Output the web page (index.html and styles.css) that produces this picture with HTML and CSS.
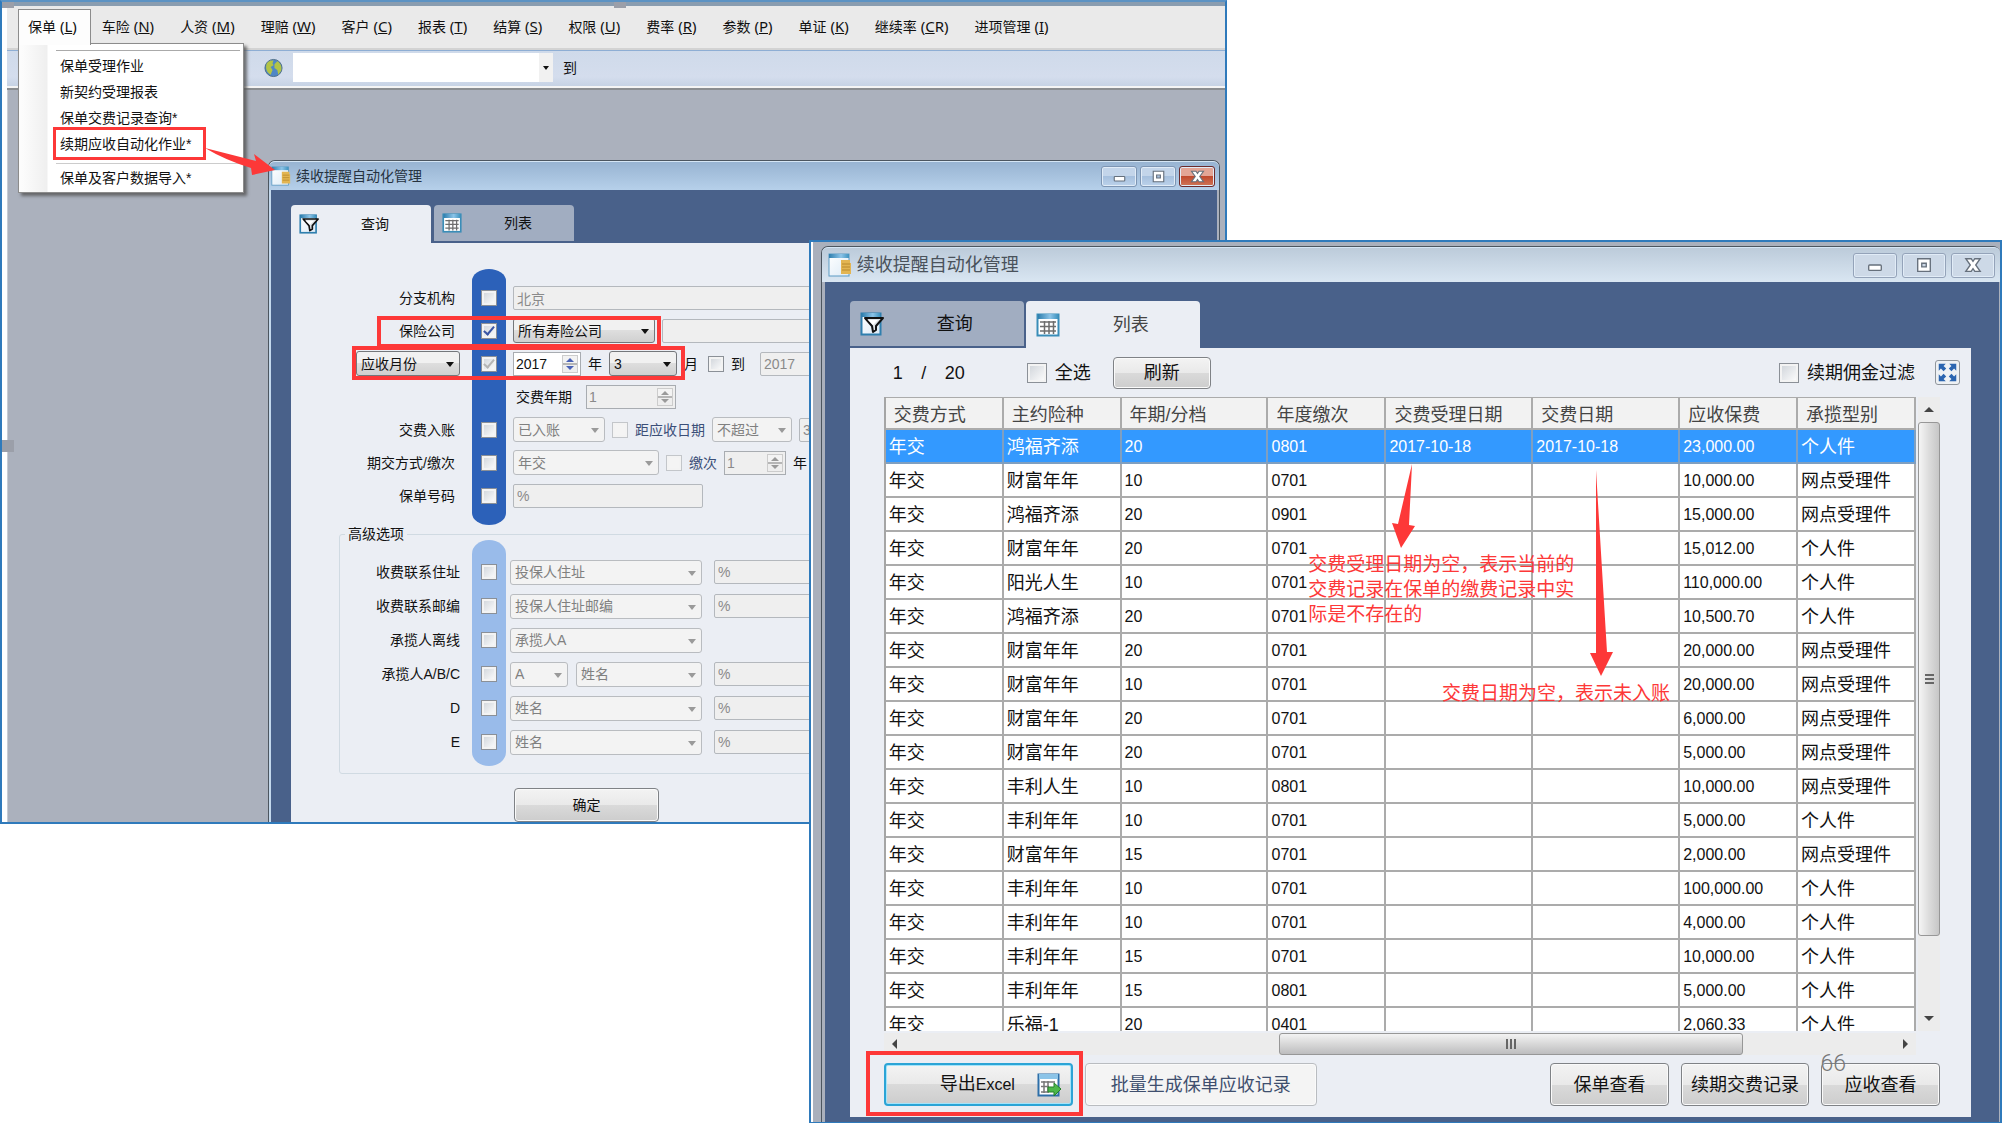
FILE: index.html
```html
<!DOCTYPE html>
<html lang="zh-CN">
<head>
<meta charset="utf-8">
<title>续收提醒自动化管理</title>
<link rel="stylesheet" href="styles.css">
</head>
<body>
<svg class="defs" aria-hidden="true">
  <defs>
    <linearGradient id="head" x1="0" y1="0" x2="1" y2="0"><stop offset="0" stop-color="#2f7fae"/><stop offset=".6" stop-color="#8cc4e8"/><stop offset="1" stop-color="#3f93bf"/></linearGradient>
    <linearGradient id="paper" x1="0" y1="0" x2="1" y2="1"><stop offset="0" stop-color="#fff"/><stop offset="1" stop-color="#dceaf6"/></linearGradient>
  </defs>
  <symbol id="i-form" viewBox="0 0 24 24">
    <rect x="1" y="1" width="20" height="22" fill="url(#paper)" stroke="#5d9bc4"/>
    <rect x="1" y="1" width="20" height="4" fill="url(#head)"/>
    <path d="M13 7h9v3h1v11H13z" fill="#e3b552"/><path d="M14 11h8M14 14h8M14 17h8" stroke="#b98a2c"/>
  </symbol>
  <symbol id="i-filter" viewBox="0 0 24 24">
    <rect x="1.500" y="1.500" width="19" height="21" fill="url(#paper)" stroke="#2f7fae" stroke-width="2"/>
    <rect x="2" y="1" width="18" height="4" fill="url(#head)"/>
    <path d="M5 6h18l-7 8v4l-3 2-1-6z" fill="#dfe3e6" stroke="#111" stroke-width="2" stroke-linejoin="round"/>
    <path d="M8 8h10l-5 5z" fill="#fff"/>
  </symbol>
  <symbol id="i-grid" viewBox="0 0 24 24">
    <rect x="1.500" y="1.500" width="21" height="21" fill="#fff" stroke="#3a8db8" stroke-width="2"/>
    <rect x="2" y="1" width="20" height="5" fill="url(#head)"/>
    <path d="M4 9h16M4 13.500h16M4 18h16M8.500 8v13M13 8v13M17.500 8v13" stroke="#6d6d6d" stroke-width="1.500" fill="none"/>
  </symbol>
  <symbol id="i-export" viewBox="0 0 24 24">
    <rect x="1.500" y="1.500" width="20" height="21" fill="#fff" stroke="#2e6fa8" stroke-width="2"/>
    <rect x="2" y="1" width="19" height="5" fill="#8cc4e8"/>
    <path d="M4 9h14M4 13.500h8M4 19h7M7 8v12M11 8v12" stroke="#777" stroke-width="1.500" fill="none"/>
    <path d="M11 14h6v-4l7 6-7 7v-4h-6z" fill="#4cb749" stroke="#27802a"/>
  </symbol>
  <symbol id="i-globe" viewBox="0 0 20 20">
    <circle cx="10" cy="10" r="9" fill="#4f87c6" stroke="#4c6d86"/>
    <path d="M3 5c2-3 5-3 7-3l-1 3 1 2-3 2 2 3-2 5c-4-2-6-7-4-12zM11 6l3-3c4 2 5 7 4 10l-3 4-1-5-3-2z" fill="#b3c446"/>
  </symbol>
  <symbol id="i-expand" viewBox="0 0 24 24">
    <path d="M2 2h8L7.500 4.500l3 3-3 3-3-3L2 10zM22 2v8l-2.500-2.500-3 3-3-3 3-3L14 2zM2 22v-8l2.500 2.500 3-3 3 3-3 3L10 22zM22 22h-8l2.500-2.500-3-3 3-3 3 3L22 14z" fill="#2b65b0"/>
  </symbol>
  <symbol id="i-min" viewBox="0 0 20 20"><rect x="3" y="10" width="14" height="6" rx="1" fill="#fff" stroke="#66707c" stroke-width="1.500"/></symbol>
  <symbol id="i-max" viewBox="0 0 20 20"><path d="M3 3h14v14H3zM7.500 8v4h5V8z" fill="#fff" fill-rule="evenodd" stroke="#66707c" stroke-width="1.500"/></symbol>
  <symbol id="i-close" viewBox="0 0 20 20"><path d="M2 3h6l2 3 2-3h6l-5 7 5 7h-6l-2-3-2 3H2l5-7z" fill="#fff" stroke="#66707c" stroke-width="1.500"/></symbol>
</svg>

<main class="slide">
  <section class="shot shot-main">
    <nav class="menubar">
      <a href="#" class="open">保单 <span>(<u>L</u>)</span></a><a href="#">车险 <span>(<u>N</u>)</span></a><a href="#">人资 <span>(<u>M</u>)</span></a><a href="#">理赔 <span>(<u>W</u>)</span></a><a href="#">客户 <span>(<u>C</u>)</span></a><a href="#">报表 <span>(<u>T</u>)</span></a><a href="#">结算 <span>(<u>S</u>)</span></a><a href="#">权限 <span>(<u>U</u>)</span></a><a href="#">费率 <span>(<u>R</u>)</span></a><a href="#">参数 <span>(<u>P</u>)</span></a><a href="#">单证 <span>(<u>K</u>)</span></a><a href="#">继续率 <span>(<u>C</u>R)</span></a><a href="#">进项管理 <span>(<u>I</u>)</span></a>
    </nav>
    <div class="toolbar">
      <svg><use href="#i-globe"/></svg>
      <span class="pick address"><select id="addr" aria-label="地址"><option></option></select></span>
      <label for="addr">到</label>
    </div>
    <ul class="dropdown">
      <li><a href="#">保单受理作业</a></li>
      <li><a href="#">新契约受理报表</a></li>
      <li><a href="#">保单交费记录查询*</a></li>
      <li class="marked"><a href="#">续期应收自动化作业*</a></li>
      <li class="split"><a href="#">保单及客户数据导入*</a></li>
    </ul>
    <svg class="arrow-menu" viewBox="0 0 70 32"><path d="M0 0L51 13L49 6L70 22L47 27L46 20Q20 12 0 0z"/></svg>
    <i class="handle h-left"></i><i class="handle h-mid"></i><i class="handle h-side"></i>

    <div class="mdi">
      <div class="window active">
        <header class="titlebar">
          <svg><use href="#i-form"/></svg><h2>续收提醒自动化管理</h2>
          <button aria-label="最小化"><svg><use href="#i-min"/></svg></button>
          <button aria-label="最大化"><svg><use href="#i-max"/></svg></button>
          <button class="close" aria-label="关闭"><svg><use href="#i-close"/></svg></button>
        </header>
        <div class="client">
          <div class="tabs">
            <button class="tab on"><svg><use href="#i-filter"/></svg><span>查询</span></button>
            <button class="tab"><svg><use href="#i-grid"/></svg><span>列表</span></button>
          </div>
          <form class="page">
            <div class="criteria">
              <div class="row">
                <label for="c1">分支机构</label><input type="checkbox" id="c1">
                <div class="fields"><input class="text grow" value="北京" aria-label="分支机构" disabled></div>
              </div>
              <div class="row">
                <label for="c2">保险公司</label><input type="checkbox" id="c2" checked>
                <div class="fields"><span class="pick live w-company"><select aria-label="保险公司"><option>所有寿险公司</option></select></span><input class="text grow" aria-label="公司名称" disabled></div>
              </div>
              <div class="row">
                <span class="pick live w-month"><select aria-label="月份类型"><option>应收月份</option></select></span><input type="checkbox" id="c3" aria-label="应收月份" checked disabled>
                <div class="fields"><span class="spin on w-year"><input value="2017" aria-label="年份"><b></b></span><span>年</span><span class="pick live w-num"><select aria-label="月"><option>3</option></select></span><span>月</span><span class="until"><input type="checkbox" id="c3b"><label for="c3b">到</label></span><input class="text grow" value="2017" aria-label="截止年份" disabled></div>
              </div>
              <div class="row">
                <div class="fields roomy"><label for="term">交费年期</label><span class="spin w-term"><input id="term" value="1" disabled><b></b></span></div>
              </div>
              <div class="row">
                <label for="c5">交费入账</label><input type="checkbox" id="c5">
                <div class="fields"><span class="pick w-posted"><select aria-label="入账" disabled><option>已入账</option></select></span><input type="checkbox" id="c5b" class="off" disabled><label class="blue" for="c5b">距应收日期</label><span class="pick w-limit"><select aria-label="比较" disabled><option>不超过</option></select></span><input class="text grow" value="3" aria-label="天数" disabled></div>
              </div>
              <div class="row">
                <label for="c6">期交方式/缴次</label><input type="checkbox" id="c6">
                <div class="fields"><span class="pick w-mode"><select aria-label="期交方式" disabled><option>年交</option></select></span><input type="checkbox" id="c6b" class="off" disabled><label class="blue" for="c6b">缴次</label><span class="spin w-times"><input value="1" aria-label="缴次" disabled><b></b></span><span>年</span></div>
              </div>
              <div class="row">
                <label for="c7">保单号码</label><input type="checkbox" id="c7">
                <div class="fields"><input class="text w-policy" value="%" aria-label="保单号码" disabled></div>
              </div>
              <div class="pill"></div>
              <i class="frame frame-company"></i><i class="frame frame-month"></i>
            </div>
            <fieldset>
              <legend>高级选项</legend>
              <div class="criteria more">
                <div class="row">
                  <label for="d1">收费联系住址</label><input type="checkbox" id="d1">
                  <div class="fields"><span class="pick w-adv"><select aria-label="住址" disabled><option>投保人住址</option></select></span><input class="text grow" value="%" aria-label="住址内容" disabled></div>
                </div>
                <div class="row">
                  <label for="d2">收费联系邮编</label><input type="checkbox" id="d2">
                  <div class="fields"><span class="pick w-adv"><select aria-label="邮编" disabled><option>投保人住址邮编</option></select></span><input class="text grow" value="%" aria-label="邮编内容" disabled></div>
                </div>
                <div class="row">
                  <label for="d3">承揽人离线</label><input type="checkbox" id="d3">
                  <div class="fields"><span class="pick w-adv"><select aria-label="离线" disabled><option>承揽人A</option></select></span></div>
                </div>
                <div class="row">
                  <label for="d4">承揽人A/B/C</label><input type="checkbox" id="d4">
                  <div class="fields"><span class="duo"><span class="pick w-abc"><select aria-label="承揽人" disabled><option>A</option></select></span><span class="pick grow"><select aria-label="承揽人字段" disabled><option>姓名</option></select></span></span><input class="text grow" value="%" aria-label="承揽人内容" disabled></div>
                </div>
                <div class="row">
                  <label for="d5">D</label><input type="checkbox" id="d5">
                  <div class="fields"><span class="pick w-adv"><select aria-label="D字段" disabled><option>姓名</option></select></span><input class="text grow" value="%" aria-label="D内容" disabled></div>
                </div>
                <div class="row">
                  <label for="d6">E</label><input type="checkbox" id="d6">
                  <div class="fields"><span class="pick w-adv"><select aria-label="E字段" disabled><option>姓名</option></select></span><input class="text grow" value="%" aria-label="E内容" disabled></div>
                </div>
                <div class="pill"></div>
              </div>
            </fieldset>
            <button type="button" class="btn confirm">确定</button>
          </form>
        </div>
      </div>
    </div>
  </section>

  <section class="shot shot-list">
    <div class="window">
      <header class="titlebar">
        <svg><use href="#i-form"/></svg><h2>续收提醒自动化管理</h2>
        <button aria-label="最小化"><svg><use href="#i-min"/></svg></button>
        <button aria-label="最大化"><svg><use href="#i-max"/></svg></button>
        <button aria-label="关闭"><svg><use href="#i-close"/></svg></button>
      </header>
      <div class="client">
        <div class="tabs">
          <button class="tab"><svg><use href="#i-filter"/></svg><span>查询</span></button>
          <button class="tab on"><svg><use href="#i-grid"/></svg><span>列表</span></button>
        </div>
        <div class="page">
          <div class="tools">
            <span class="pager"><span>1</span><span>/</span><span>20</span></span>
            <input type="checkbox" id="all"><label for="all">全选</label>
            <button class="btn refresh">刷新</button>
            <span class="push"></span>
            <input type="checkbox" id="flt"><label for="flt">续期佣金过滤</label>
            <button class="expand" aria-label="全屏"><svg><use href="#i-expand"/></svg></button>
          </div>
          <div class="sheet">
            <div class="viewport">
              <table>
                <colgroup><col class="c-s"><col class="c-s"><col class="c-l"><col class="c-s"><col class="c-l"><col class="c-l"><col class="c-s"><col class="c-s"></colgroup>
                <thead><tr><th>交费方式</th><th>主约险种</th><th>年期/分档</th><th>年度缴次</th><th>交费受理日期</th><th>交费日期</th><th>应收保费</th><th>承揽型别</th></tr></thead>
                <tbody>
                  <tr class="sel"><td>年交</td><td>鸿福齐添</td><td>20</td><td>0801</td><td>2017-10-18</td><td>2017-10-18</td><td>23,000.00</td><td>个人件</td></tr>
                  <tr><td>年交</td><td>财富年年</td><td>10</td><td>0701</td><td></td><td></td><td>10,000.00</td><td>网点受理件</td></tr>
                  <tr><td>年交</td><td>鸿福齐添</td><td>20</td><td>0901</td><td></td><td></td><td>15,000.00</td><td>网点受理件</td></tr>
                  <tr><td>年交</td><td>财富年年</td><td>20</td><td>0701</td><td></td><td></td><td>15,012.00</td><td>个人件</td></tr>
                  <tr><td>年交</td><td>阳光人生</td><td>10</td><td>0701</td><td></td><td></td><td>110,000.00</td><td>个人件</td></tr>
                  <tr><td>年交</td><td>鸿福齐添</td><td>20</td><td>0701</td><td></td><td></td><td>10,500.70</td><td>个人件</td></tr>
                  <tr><td>年交</td><td>财富年年</td><td>20</td><td>0701</td><td></td><td></td><td>20,000.00</td><td>网点受理件</td></tr>
                  <tr><td>年交</td><td>财富年年</td><td>10</td><td>0701</td><td></td><td></td><td>20,000.00</td><td>网点受理件</td></tr>
                  <tr><td>年交</td><td>财富年年</td><td>20</td><td>0701</td><td></td><td></td><td>6,000.00</td><td>网点受理件</td></tr>
                  <tr><td>年交</td><td>财富年年</td><td>20</td><td>0701</td><td></td><td></td><td>5,000.00</td><td>网点受理件</td></tr>
                  <tr><td>年交</td><td>丰利人生</td><td>10</td><td>0801</td><td></td><td></td><td>10,000.00</td><td>网点受理件</td></tr>
                  <tr><td>年交</td><td>丰利年年</td><td>10</td><td>0701</td><td></td><td></td><td>5,000.00</td><td>个人件</td></tr>
                  <tr><td>年交</td><td>财富年年</td><td>15</td><td>0701</td><td></td><td></td><td>2,000.00</td><td>网点受理件</td></tr>
                  <tr><td>年交</td><td>丰利年年</td><td>10</td><td>0701</td><td></td><td></td><td>100,000.00</td><td>个人件</td></tr>
                  <tr><td>年交</td><td>丰利年年</td><td>10</td><td>0701</td><td></td><td></td><td>4,000.00</td><td>个人件</td></tr>
                  <tr><td>年交</td><td>丰利年年</td><td>15</td><td>0701</td><td></td><td></td><td>10,000.00</td><td>个人件</td></tr>
                  <tr><td>年交</td><td>丰利年年</td><td>15</td><td>0801</td><td></td><td></td><td>5,000.00</td><td>个人件</td></tr>
                  <tr><td>年交</td><td>乐福-1</td><td>20</td><td>0401</td><td></td><td></td><td>2,060.33</td><td>个人件</td></tr>
                </tbody>
              </table>
              <svg class="arrow-down a-one" viewBox="0 0 24 84"><path d="M20 0L17 61L23 62L9 84L0 59L6 60z"/></svg>
              <svg class="arrow-down a-two" viewBox="0 0 24 206"><path d="M6 0L17 182L23 182L11 206L0 183L6 183z"/></svg>
              <p class="note n-one">交费受理日期为空，表示当前的交费记录在保单的缴费记录中实际是不存在的</p>
              <p class="note n-two">交费日期为空，表示未入账</p>
            </div>
            <div class="vbar"><i class="tri up"></i><div class="thumb"><i></i><i></i><i></i></div><i class="tri down"></i></div>
            <div class="hbar"><i class="tri left"></i><div class="thumb"><i></i><i></i><i></i></div><i class="tri right"></i></div>
          </div>
          <footer class="actions">
            <span class="export-wrap"><button class="btn export"><span>导出<small>Excel</small></span><svg><use href="#i-export"/></svg></button><i class="frame"></i></span>
            <button class="btn batch" disabled>批量生成保单应收记录</button>
            <span class="push"></span>
            <button class="btn view">保单查看</button>
            <button class="btn record">续期交费记录</button>
            <button class="btn view">应收查看</button>
            <span class="page-no">66</span>
          </footer>
        </div>
      </div>
    </div>
  </section>
</main>
</body>
</html>
```
FILE: styles.css
```css
*, *::before, *::after { box-sizing: border-box; }
body { margin: 0; background: #fff; color: #111; font: 14px/20px "Liberation Sans", "Noto Sans CJK SC", sans-serif; }
.defs { position: absolute; width: 0; height: 0; }
button, input, select { font: inherit; color: inherit; margin: 0; }
h2, p, ul { margin: 0; padding: 0; font-weight: 400; }
a { color: inherit; text-decoration: none; }
i { font-style: normal; }
svg { display: block; flex: none; }

.slide { position: relative; min-height: 100vh; overflow: hidden; }
.shot { position: absolute; isolation: isolate; border: 2px solid #2f7abb; }
.shot-main { left: 0; top: 0; width: 61.300%; border-top-color: #5c93c4; background: #fff; padding: 4px 0 0 5px; box-shadow: inset 0 4px #8a9db0; }
.shot-list { left: 40.400%; right: 0; top: 240px; background: #aab0bc; padding: 4px 0 0 10px; box-shadow: inset 2px 0 #fff; font-size: 18px; }

/* menu bar and toolbar */
.menubar { display: flex; height: 44px; padding: 3px 0 0 11px; background: #eaeaea; border-bottom: 2px solid #d3d3d3; white-space: pre; }
.menubar a { height: 36px; padding: 0 13px; line-height: 35px; }
.menubar span { font-family: "Noto Sans", sans-serif; font-size: 15px; }
.menubar .open { position: relative; z-index: 3; padding: 0 13px 0 9px; margin-right: -2px; background: #fdfdfd; border: 1px solid #8c8c8c; border-bottom: 0; line-height: 33px; }
.toolbar { display: flex; align-items: center; gap: 10px; height: 40px; padding: 0 0 4px 257px; background: linear-gradient(#cfdaea, #d4dded 70%, #c3d0e2); border-top: 1px solid #8eaed4; border-bottom: 2px solid #8a8d90; box-shadow: inset 0 -2px #f4f4f4; }
.toolbar svg { width: 19px; height: 20px; }
.address { width: 260px; }
.dropdown { position: absolute; z-index: 2; left: 16px; top: 41px; width: 226px; padding: 11px 0 1px; list-style: none; background: linear-gradient(90deg, #fcfcfc 3px, #efefef 28px, #fff 29px); border: 1px solid #8c8c8c; box-shadow: 3px 3px 3px #555c; }
.dropdown::before { content: ""; position: absolute; left: 37px; right: 3px; top: 6px; border-top: 1px solid #aaa; }
.dropdown li { position: relative; height: 26px; padding-left: 41px; line-height: 22px; }
.dropdown a { display: block; }
.dropdown .split { height: 27px; margin-top: 5px; padding-top: 3px; }
.split::before { content: ""; position: absolute; left: 37px; right: 3px; top: -1px; border-top: 1px solid #ccc; }
.marked::after { content: ""; position: absolute; left: 34px; top: -6px; width: 153px; height: 33px; border: 3px solid #fd3838; }
.arrow-menu { position: absolute; z-index: 3; left: 203px; top: 146px; width: 70px; height: 32px; fill: #fd3838; }
.handle { position: absolute; width: 12px; height: 6px; background: #9b9fa9; top: 0; }
.h-left { left: 0; }
.h-mid { left: 50%; }
.h-side { left: 0; top: 438px; height: 12px; }

/* windows */
.mdi { padding: 70px 5px 0 260px; background: #abb1bd; border-left: 1px solid #c8ccd3; }
.window { border: 1px solid #4c5660; border-bottom: 0; border-radius: 7px 7px 0 0; }
.active { box-shadow: inset 2px 0 #c3d8ec; }
.titlebar { display: flex; align-items: center; gap: 3px; height: 29px; padding: 0 4px 0 2px; background: linear-gradient(#98b4d2, #b6d0ea); border-top: 1px solid #d5e6f5; border-radius: 6px 6px 0 0; }
.titlebar > svg { width: 20px; height: 20px; margin-right: 2px; }
.titlebar h2 { flex: 1; font-size: 14px; line-height: 20px; color: #26323f; }
.titlebar button { display: grid; place-items: center; width: 36px; height: 21px; padding: 0; border: 1px solid #7d95b3; border-radius: 3px; background: linear-gradient(#c3d5ea 50%, #a6c0de 50%, #bcd2ea); box-shadow: inset 0 0 0 1px #e1ecf7; }
.titlebar button svg { width: 15px; height: 15px; }
.titlebar .close { border-color: #6d2a2c; background: linear-gradient(#e3a596 50%, #c04a2f 50%, #cf7658); }
.client { margin: 0 2px; padding: 15px 20px 0; background: #49618a; }
.tabs { display: flex; align-items: flex-start; gap: 3px; }
.tab { display: flex; align-items: center; width: 140px; height: 36px; padding: 0 8px; border: 0; border-radius: 4px 4px 0 0; background: #a1adc1; margin-bottom: 2px; }
.tab.on { height: 38px; margin-bottom: 0; background: #ebeef4; }
.tab svg { width: 20px; height: 20px; }
.tab span { flex: 1; text-align: center; padding-left: 8px; }
.page { background: #ebeef4; }

/* query form */
.active .page { padding-top: 38px; }
.criteria { position: relative; display: grid; grid-template-columns: 174px 34px 1fr; grid-auto-rows: 33px; column-gap: 7px; padding-right: 20px; }
.row { z-index: 1; grid-column: 1 / -1; display: grid; grid-template-columns: inherit; column-gap: inherit; align-items: center; }
.row:nth-child(1) { grid-row: 1; }
.row:nth-child(2) { grid-row: 2; }
.row:nth-child(3) { grid-row: 3; }
.row:nth-child(4) { grid-row: 4; }
.row:nth-child(5) { grid-row: 5; }
.row:nth-child(6) { grid-row: 6; }
.row:nth-child(7) { grid-row: 7; }
.row > label { justify-self: end; margin-right: 10px; }
.row > .pick { justify-self: end; margin-right: 5px; }
.row > input { justify-self: center; }
.pill { grid-column: 2; grid-row: 1 / span 7; margin: -12px 0 -13px; background: #2c61b9; border-radius: 17px / 12px; }
.fields { grid-column: 3; display: flex; align-items: center; gap: 7px; min-width: 0; }
.until { display: flex; align-items: center; gap: 7px; margin: 0 8px 0 3px; }
.roomy { gap: 14px; padding-left: 3px; }
.blue { color: #3b4f78; }
input[type=checkbox] { appearance: none; display: grid; place-items: center; flex: none; width: 16px; height: 16px; border: 1px solid #8b9097; background: linear-gradient(135deg, #cdd2d8, #fff); box-shadow: inset 0 0 0 2px #f3f3f3; }
input[type=checkbox].off { border-color: #c3c6ca; background: #f4f4f4; }
input[type=checkbox]:checked::after { content: ""; width: 6px; height: 11px; margin-top: -3px; border: solid #3a55a5; border-width: 0 2px 2px 0; transform: rotate(40deg); }
input[type=checkbox]:checked:disabled::after { border-color: #b5b5b5; }
.text { height: 24px; min-width: 0; padding: 0 3px; border: 1px solid #b4b8bd; border-radius: 2px; background: #efefef; color: #8a8a8a; }
.grow { flex: 1; }
.pick { position: relative; display: block; color: #808080; }
.pick select { appearance: none; display: block; width: 100%; height: 25px; padding: 0 20px 0 4px; border: 1px solid #b9bcc0; border-radius: 3px; background: #f3f3f3; color: inherit; opacity: 1; }
.pick::after { content: ""; position: absolute; right: 6px; top: 11px; border: solid transparent; border-width: 5px 4px 0; border-top-color: #9a9a9a; pointer-events: none; }
.live { color: #111; }
.live select { border-color: #74777b; background: linear-gradient(#f1f1f1 50%, #dedede 50%, #d0d0d0); }
.live::after, .address::after { border-top-color: #111; }
.address select { height: 29px; border: 0; border-radius: 0; background: linear-gradient(90deg, #fff 246px, #f1f1f1 246px); }
.address::after { right: 4px; top: 13px; border-width: 4px 3px 0; }
.spin { display: flex; height: 24px; border: 1px solid #a8acb1; background: #efefef; color: #8a8a8a; }
.spin input { flex: 1; width: 100%; min-width: 0; padding: 0 2px; border: 0; background: none; }
.spin.on { background: #fff; color: #111; }
.spin b { position: relative; flex: none; width: 16px; margin: 2px; background: linear-gradient(#f3f3f3 45%, #b6b6b6 45% 55%, #eee 55%); border: 1px solid #ccc; }
.spin b::before, .spin b::after { content: ""; position: absolute; left: 3px; border: solid transparent; }
.spin b::before { top: 2px; border-width: 0 4px 4px; border-bottom-color: #9a9a9a; }
.spin b::after { bottom: 2px; border-width: 4px 4px 0; border-top-color: #9a9a9a; }
.spin.on b::before { border-bottom-color: #4a62b5; }
.spin.on b::after { border-top-color: #4a62b5; }
.w-company { width: 142px; }
.w-month { width: 104px; }
.w-year, .w-num { width: 68px; }
.w-term { width: 90px; }
.w-posted { width: 92px; }
.w-limit { width: 80px; }
.w-mode { width: 146px; }
.w-times { width: 62px; }
.w-policy { width: 190px; }
.w-adv, .duo { flex: none; width: 192px; }
.w-abc { width: 58px; }
.frame { position: absolute; z-index: 2; border: 4px solid #fd3838; pointer-events: none; }
.frame-company { left: 86px; top: 35px; width: 284px; height: 32px; }
.frame-month { left: 61px; top: 65px; width: 333px; height: 34px; }
fieldset { margin: 12px 20px 0 48px; padding: 11px 0 14px; border: 1px solid #d0dae2; border-radius: 3px; min-width: 0; }
legend { margin-left: 5px; padding: 0 3px; line-height: 20px; }
.more { grid-template-columns: 128px 34px 1fr; grid-auto-rows: 34px; column-gap: 4px; }
.more .pill { grid-row: 1 / span 6; margin: -15px 0 -7px; background: #99bbea; border-radius: 17px / 14px; }
.more .row > label { margin-right: 8px; }
.more .fields { gap: 12px; }
.duo { display: flex; gap: 8px; }
.btn { border: 1px solid #7f8286; border-radius: 4px; padding: 0; background: linear-gradient(#f3f3f3, #e9e9e9 50%, #dadada 50%, #cdcdcd); box-shadow: inset 0 0 0 1px #fafafa; white-space: nowrap; }
.confirm { display: block; width: 145px; height: 34px; margin: 14px 0 0 223px; }

/* list window */
.shot-list .window { border-right: 0; }
.shot-list .titlebar { height: 35px; padding: 0 5px 0 6px; gap: 5px; background: linear-gradient(#bccbda, #d9e6f2); }
.shot-list .titlebar > svg { width: 24px; height: 24px; margin: 0; }
.shot-list h2 { font-size: 18px; line-height: 24px; color: #4a525b; }
.shot-list .titlebar button { width: 44px; height: 25px; border-color: #94a3b9; background: #cdd9e7; }
.shot-list .titlebar button svg { width: 18px; height: 18px; }
.shot-list .client { margin: 0 1px 0 3px; padding: 19px 28px 5px 25px; }
.shot-list .tabs { gap: 2px; }
.shot-list .tab { width: 174px; height: 45px; padding: 0 10px; }
.shot-list .tab.on { height: 47px; color: #444; }
.shot-list .tab svg { width: 24px; height: 24px; }
.shot-list .tab span { padding-left: 12px; }
.shot-list .page { padding: 0 31px 11px 34px; }
.tools { display: flex; align-items: center; height: 49px; gap: 8px; margin-right: -20px; }
.tools input[type=checkbox] { width: 20px; height: 20px; }
.pager { display: flex; justify-content: space-between; width: 72px; margin: 0 54px 0 9px; }
.refresh { width: 98px; height: 32px; margin-left: 14px; }
.push { flex: 1; }
.expand { width: 25px; height: 25px; margin-left: 12px; padding: 1px; border: 1px solid #8f959c; border-radius: 3px; background: #eef1f4; }
.expand svg { width: 21px; height: 21px; }
.sheet { display: grid; grid-template-columns: 1fr 22px; column-gap: 2px; }
.viewport { position: relative; height: 634px; overflow: hidden; background: #fff; border-left: 2px solid #a5a5a5; }
table { width: 100%; table-layout: fixed; border-collapse: separate; border-spacing: 0; }
.c-s { width: 11.400%; }
.c-l { width: 14.200%; }
th, td { height: 34px; padding: 1px 0 0 3px; border: solid #ababab; border-width: 0 2px 2px 0; text-align: left; font-weight: 400; line-height: 24px; white-space: nowrap; }
th { height: 33px; padding: 3px 0 0 8px; border-top-width: 1px; background: #f2f2f2; color: #444; }
td:nth-child(n+3):nth-child(-n+7) { font-size: 16px; }
.sel td { background: #3399ff; color: #fff; border-color: #7f9fc0; }
.note { position: absolute; color: #fd3838; font-size: 19px; line-height: 25px; }
.n-one { left: 41%; top: 155px; width: 266px; }
.n-two { left: 54%; top: 284px; white-space: nowrap; }
.arrow-down { position: absolute; width: 24px; fill: #fd3838; }
.a-one { left: 49.100%; top: 67px; height: 84px; }
.a-two { left: 68.400%; top: 73px; height: 206px; }
.vbar, .hbar { display: flex; align-items: center; justify-content: space-between; background: #ececec; }
.vbar { flex-direction: column; padding: 10px 0; }
.hbar { margin-top: 2px; height: 22px; padding: 0 8px; }
.tri { border: 5px solid transparent; }
.up { border-top: 0; border-bottom-color: #444; }
.down { border-bottom: 0; border-top-color: #444; }
.left { border-left: 0; border-right-color: #444; }
.right { border-right: 0; border-left-color: #444; }
.thumb { display: flex; align-items: center; justify-content: center; gap: 2px; border: 1px solid #979797; border-radius: 3px; }
.vbar .thumb { flex-direction: column; width: 22px; height: 514px; margin-bottom: 70px; background: linear-gradient(90deg, #f5f5f5, #dcdcdc 50%, #c6c6c6); }
.hbar .thumb { width: 464px; height: 22px; margin-left: 222px; background: linear-gradient(#f3f3f3, #d8d8d8 50%, #bdbdbf); }
.thumb i { background: #666; }
.vbar .thumb i { width: 9px; height: 2px; }
.hbar .thumb i { width: 2px; height: 10px; }
.actions { position: relative; display: flex; align-items: center; gap: 12px; padding-top: 8px; }
.actions .btn { height: 43px; }
.export-wrap { position: relative; }
.export-wrap .frame { inset: -12px -10px -10px -18px; }
.actions .export { display: flex; align-items: center; width: 189px; padding: 0 10px 0 54px; border: 2px solid #2ba4d6; box-shadow: inset 0 0 0 1px #a4e4fa; }
.export span { flex: 1; text-align: left; }
.export small { font-size: 16px; }
.export svg { width: 24px; height: 24px; }
.batch { width: 232px; background: #f4f4f4; border-color: #b9bcc0; color: #3f4f6e; }
.view { width: 119px; }
.record { width: 128px; }
.page-no { position: absolute; right: 94px; top: -5px; color: #777; font: 300 23px/28px Roboto, sans-serif; }
```
